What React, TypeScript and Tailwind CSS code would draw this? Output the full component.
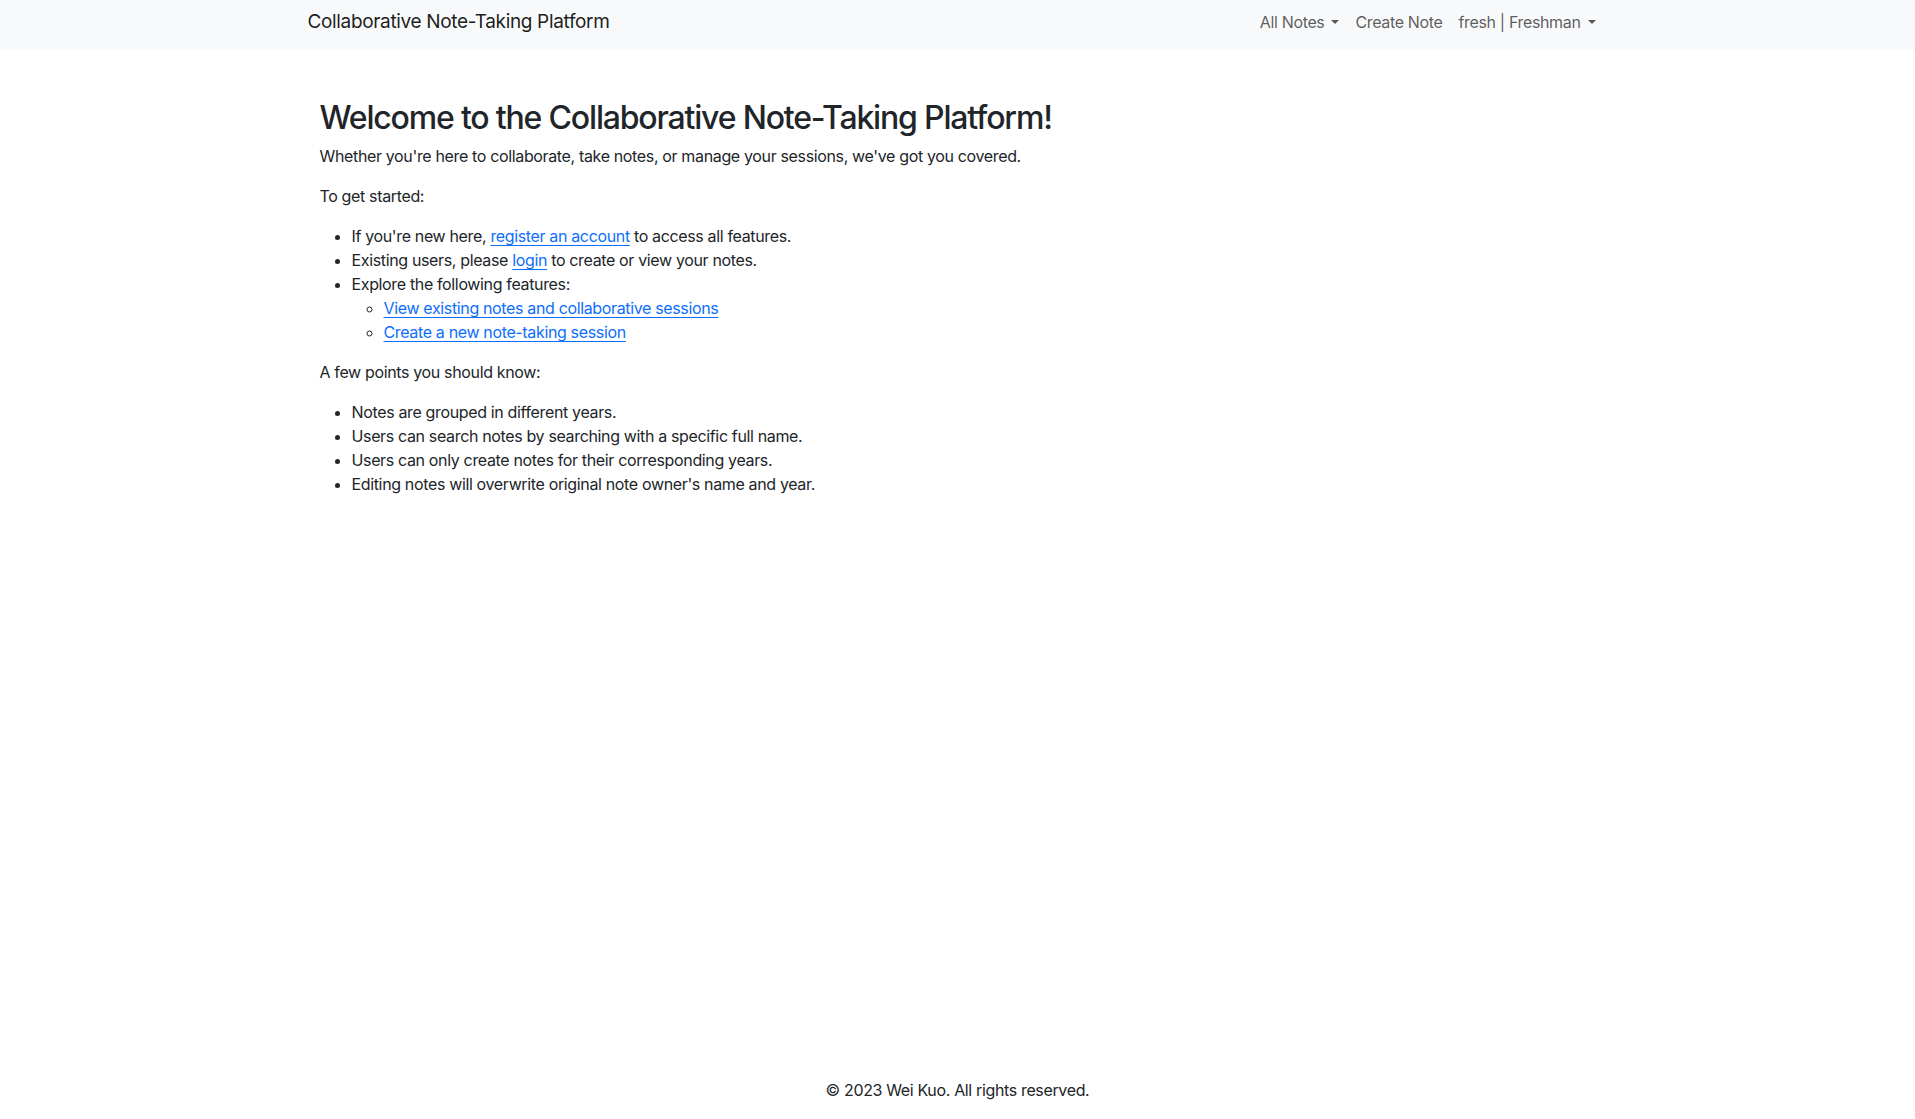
import React from 'react';

const Caret = () => (
    <span className="inline-block ml-[7px] align-[0.2em] border-t-[0.3em] border-x-[0.3em] border-b-0 border-t-current border-x-transparent" />
);

const NavLink: React.FC<{ label: string; dropdown?: boolean }> = ({ label, dropdown }) => (
    <a href="#" className="px-2 py-2 leading-6 text-[#000000a6] hover:text-[#000000cc]">
        {label}
        {dropdown && <Caret />}
    </a>
);

const Link: React.FC<{ children: React.ReactNode }> = ({ children }) => (
    <a href="#" className="text-[#0d6efd] underline underline-offset-[3px] decoration-1">
        {children}
    </a>
);

export default function App() {
    return (
        <div
            className="min-h-screen flex flex-col bg-white text-[#212529] text-base leading-6 tracking-[-0.022em]"
            style={{ fontFamily: 'Inter, "Noto Sans", "Liberation Sans", sans-serif' }}
        >
            {/* Navbar */}
            <nav className="h-[50px] bg-[#f8f9fa]">
                <div className="w-[1320px] mx-auto pl-[10px] pr-[14px] h-full flex items-center justify-between pb-[7px]">
                    <a href="#" className="text-[19px] leading-[30px] tracking-[-0.018em] text-[#000000e6]">
                        Collaborative Note-Taking Platform
                    </a>
                    <div className="flex items-center">
                        <NavLink label="All Notes" dropdown />
                        <NavLink label="Create Note" />
                        <NavLink label="fresh | Freshman" dropdown />
                    </div>
                </div>
            </nav>

            {/* Main content */}
            <main className="flex-1">
                <div className="w-[1320px] mx-auto pl-[22px] pr-3">
                    <h1 className="mt-[49px] mb-2 text-[32px] leading-[37px] font-medium tracking-[-0.037em]">
                        Welcome to the Collaborative Note-Taking Platform!
                    </h1>
                    <p className="mb-4">
                        Whether you're here to collaborate, take notes, or manage your sessions, we've got you covered.
                    </p>
                    <p className="mb-4">To get started:</p>
                    <ul className="mb-4 pl-8 list-disc">
                        <li>
                            If you're new here, <Link>register an account</Link> to access all features.
                        </li>
                        <li>
                            Existing users, please <Link>login</Link> to create or view your notes.
                        </li>
                        <li>
                            Explore the following features:
                            <ul className="pl-8 list-[circle]">
                                <li>
                                    <Link>View existing notes and collaborative sessions</Link>
                                </li>
                                <li>
                                    <Link>Create a new note-taking session</Link>
                                </li>
                            </ul>
                        </li>
                    </ul>
                    <p className="mb-4">A few points you should know:</p>
                    <ul className="mb-4 pl-8 list-disc">
                        <li>Notes are grouped in different years.</li>
                        <li>Users can search notes by searching with a specific full name.</li>
                        <li>Users can only create notes for their corresponding years.</li>
                        <li>Editing notes will overwrite original note owner's name and year.</li>
                    </ul>
                </div>
            </main>

            {/* Footer */}
            <footer className="h-[58px] flex items-center justify-center">
                <p>© 2023 Wei Kuo. All rights reserved.</p>
            </footer>
        </div>
    );
}
